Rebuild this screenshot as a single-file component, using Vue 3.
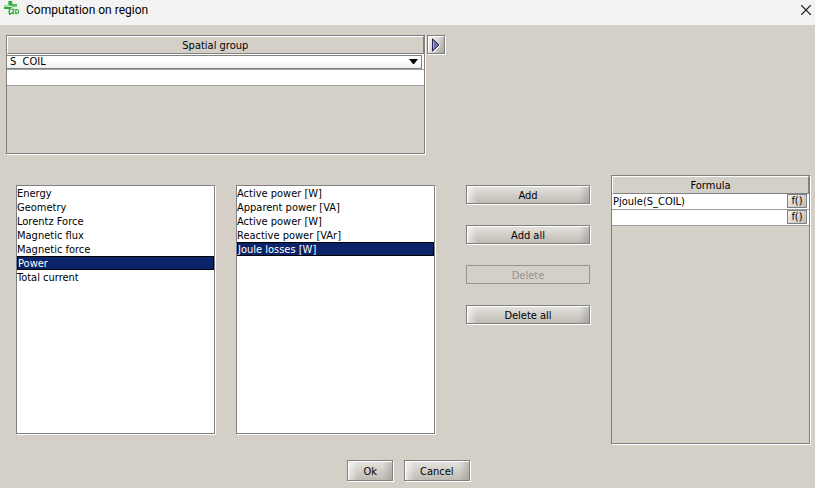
<script setup>
import { ref } from 'vue'

const groups = ref(['S\u00a0\u00a0COIL'])
const group = ref(groups.value[0])
const extraGroup = ref('')

const categories = ['Energy', 'Geometry', 'Lorentz Force', 'Magnetic flux', 'Magnetic force', 'Power', 'Total current']
const quantities = ['Active power [W]', 'Apparent power [VA]', 'Active power [W]', 'Reactive power [VAr]', 'Joule losses [W]']
const category = ref(5)
const quantity = ref(4)

const actions = [
  { label: 'Add' },
  { label: 'Add all' },
  { label: 'Delete', disabled: true },
  { label: 'Delete all' },
]
const formulas = ref(['Pjoule(S_COIL)', ''])
</script>

<template>
  <div class="dialog">
    <header class="titlebar">
      <svg class="logo" viewBox="0 0 18 18" aria-hidden="true">
        <path d="M5 0h4.500v4.500H5z" fill="#6cc472" />
        <path d="M6.500 0h2v5h-2z" fill="#2f9a38" />
        <path d="M1 4h5v3H1z" fill="#a5dca9" />
        <path d="M1 6h8v2H1z" fill="#36a33f" />
        <path d="M9 3h5v3H9z" fill="#55b95c" />
        <path d="M5 8h4v5H5z" fill="#a5dca9" />
        <path d="M6 8h2v6H6z" fill="#3aa443" />
        <circle cx="12" cy="10.500" r="5" fill="#e2f3e3" />
        <path d="M8.500 8.800q1.800-1.300 2.400 0q.3 1-2.400 3.600h3M12.800 8.500v4h.8q2.200-.3 2.200-2q0-1.800-2.200-2z" fill="none" stroke="#3da344" stroke-width="1.100" />
      </svg>
      <h1>Computation on region</h1>
      <button class="close" type="button" aria-label="Close">
        <svg viewBox="0 0 10 10" aria-hidden="true"><path d="M0 0L10 10M10 0L0 10" stroke="#111" stroke-width="1.200" /></svg>
      </button>
    </header>

    <section class="spatial">
      <div class="panel spatial-panel">
        <table>
          <thead><tr><th>Spatial group</th></tr></thead>
          <tbody>
            <tr>
              <td>
                <div class="combo">
                  <select v-model="group" aria-label="Spatial group">
                    <option v-for="g in groups" :key="g">{{ g }}</option>
                  </select>
                  <svg viewBox="0 0 9 5" aria-hidden="true"><path d="M0 0h9L5 5H4z" fill="#000" /></svg>
                </div>
              </td>
            </tr>
            <tr><td><input v-model="extraGroup" aria-label="Additional spatial group" /></td></tr>
          </tbody>
        </table>
      </div>
      <button class="btn expand" type="button" aria-label="Expand">
        <svg viewBox="0 0 9 14" aria-hidden="true">
          <path d="M2 14L9 7" stroke="#fff" stroke-width="1.500" />
          <path d="M1.500 .8v12.400L8 7z" fill="#6f70ae" stroke="#26264f" />
          <path d="M2.500 3.500v7" stroke="#a9a9da" />
        </svg>
      </button>
    </section>

    <main class="columns">
      <ul class="panel list" role="listbox" aria-label="Categories">
        <li v-for="(c, i) in categories" :key="i" role="presentation">
          <button type="button" role="option" :aria-selected="i === category" :class="{ selected: i === category }" @click="category = i">{{ c }}</button>
        </li>
      </ul>
      <ul class="panel list" role="listbox" aria-label="Quantities">
        <li v-for="(q, i) in quantities" :key="i" role="presentation">
          <button type="button" role="option" :aria-selected="i === quantity" :class="{ selected: i === quantity }" @click="quantity = i">{{ q }}</button>
        </li>
      </ul>
      <div class="actions">
        <button v-for="a in actions" :key="a.label" class="btn" type="button" :disabled="a.disabled">{{ a.label }}</button>
      </div>
      <div class="panel">
        <table>
          <thead><tr><th>Formula</th></tr></thead>
          <tbody>
            <tr v-for="(f, i) in formulas" :key="i">
              <td>
                <div class="formula">
                  <input v-model="formulas[i]" :aria-label="`Formula ${i + 1}`" />
                  <button class="fx" type="button">f()</button>
                </div>
              </td>
            </tr>
          </tbody>
        </table>
      </div>
    </main>

    <footer>
      <button class="btn" type="button">Ok</button>
      <button class="btn" type="button">Cancel</button>
    </footer>
  </div>
</template>

<style>
body {
  margin: 0;
  background: #d4d0c8;
}
</style>

<style scoped>
.dialog {
  display: flex;
  flex-direction: column;
  box-sizing: border-box;
  min-height: 100vh;
  padding-bottom: 7px;
  background: #d4d0c8;
  color: #000;
  font-family: "DejaVu Sans Condensed", "DejaVu Sans", sans-serif;
  font-size: 11px;
  line-height: 14px;
}
.dialog * {
  box-sizing: border-box;
}
button, input, select {
  margin: 0;
  padding: 0;
  border: 0;
  border-radius: 0;
  background: none;
  color: inherit;
  font: inherit;
}
.titlebar {
  display: flex;
  align-items: center;
  height: 25px;
  padding: 0 4px 5px 3px;
  background: #f3f3f3;
}
.logo {
  width: 18px;
  height: 18px;
  margin-right: 5px;
}
h1 {
  flex: 1;
  margin: 0;
  font: 400 12px/20px Roboto, "Open Sans", sans-serif;
}
.close {
  display: flex;
  padding: 0;
}
.close svg {
  width: 10px;
  height: 10px;
}
.spatial {
  display: flex;
  gap: 2px;
  padding: 10px 4px 0 6px;
}
.panel {
  border: 1px solid #808080;
  box-shadow: 1px 1px #fff;
}
.spatial-panel {
  width: 52%;
  min-height: 119px;
}
table {
  width: 100%;
  border-collapse: separate;
  border-spacing: 0;
}
th {
  height: 18px;
  padding: 2px 0 0;
  border: 1px solid #808080;
  border-top-color: #fff;
  border-left-color: #fff;
  font-weight: 400;
  text-align: center;
}
td {
  height: 16px;
  padding: 0;
  border-bottom: 1px solid #a0a0a0;
  background: #fff;
}
td input {
  display: block;
  width: 100%;
  height: 15px;
  padding: 0 1px;
  outline: 0;
}
.combo {
  display: flex;
  align-items: center;
  height: 14px;
  margin-right: 2px;
  padding-right: 3px;
  border: 1px solid #808080;
  border-left-width: 0;
  background: linear-gradient(#fff 40%, #eeeeee);
}
.combo select {
  flex: 1;
  height: 12px;
  padding-left: 3px;
  appearance: none;
  outline: 0;
  line-height: 12px;
}
.combo svg {
  width: 9px;
  height: 5px;
}
.btn {
  height: 19px;
  padding-top: 2px;
  border: 1px solid #808080;
  background: linear-gradient(90deg, #ffffffa0, #ffffff00 10px, #ffffff00 calc(100% - 10px), #80808060), linear-gradient(#e6e4de, #bfbbb4);
  box-shadow: 1px 1px #fff, inset 1px 1px #fff;
  text-align: center;
}
.btn:disabled {
  border-color: #969490;
  background: none;
  box-shadow: none;
  color: #969490;
}
.expand {
  display: flex;
  align-items: center;
  justify-content: center;
  width: 18px;
  padding: 0;
}
.expand svg {
  flex: none;
  width: 9px;
  height: 14px;
}
.columns {
  display: grid;
  flex: 1;
  grid-template-columns: 1fr 1fr 134px 1fr;
  column-gap: 21px;
  padding: 21px 5px 16px 16px;
}
.list {
  margin: 10px 0;
  padding: 0;
  background: #fff;
  list-style: none;
}
.list button {
  display: block;
  width: 100%;
  height: 14px;
  line-height: 16px;
  text-align: left;
}
.list .selected {
  border: 1px solid #000;
  background: #0a246a;
  color: #fff;
  line-height: 14px;
}
.actions {
  display: flex;
  flex-direction: column;
  gap: 21px;
  padding: 10px 0 0 10px;
}
.formula {
  display: flex;
}
.formula input {
  flex: 1;
  min-width: 0;
}
.fx {
  width: 20px;
  height: 14px;
  margin-right: 2px;
  border: 1px solid #808080;
  background: linear-gradient(135deg, #f4f3f0, #bfbbb4);
  line-height: 12px;
}
footer {
  display: flex;
  justify-content: center;
  gap: 11px;
  padding-left: 2px;
}
footer .btn {
  height: 21px;
  padding: 2px 15px 0;
}
</style>
